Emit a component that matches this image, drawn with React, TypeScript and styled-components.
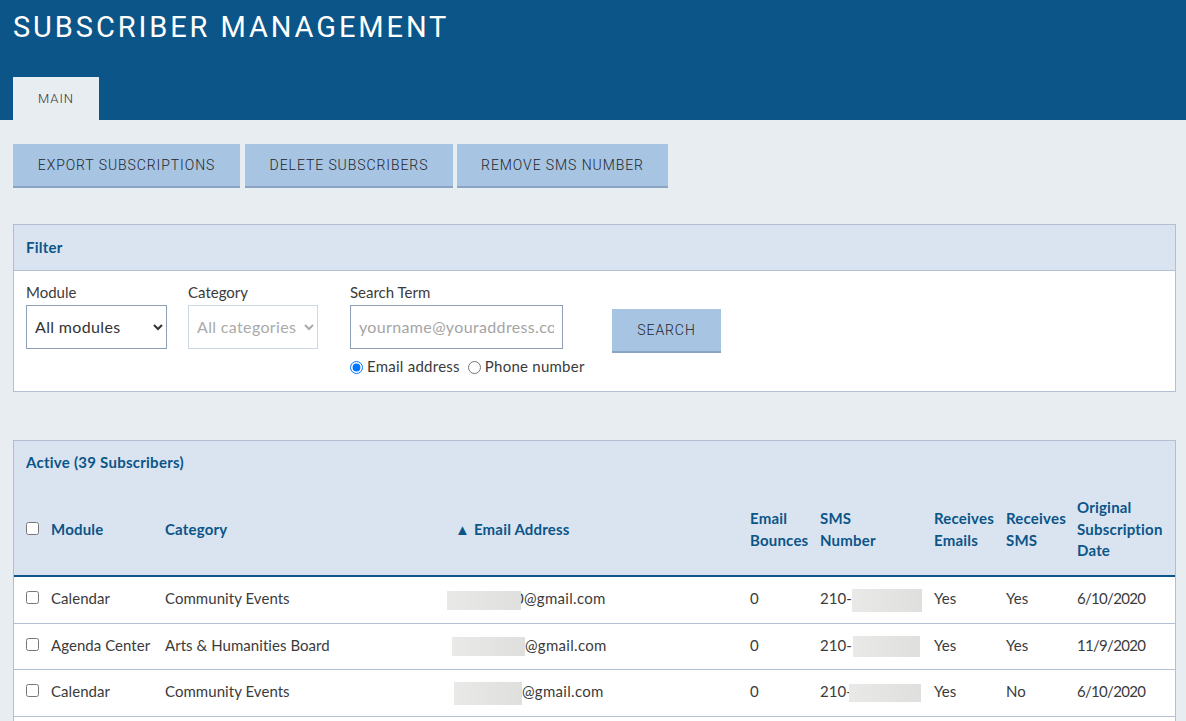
import React from "react";
import styled, { createGlobalStyle } from "styled-components";

const GlobalStyle = createGlobalStyle`
  html, body {
    margin: 0;
    height: 100%;
    overflow: hidden;
    background: #e8edf2;
  }
  body {
    font-family: "Lato", "Open Sans", sans-serif;
    font-size: 15px;
    color: #3b3b3b;
  }
  * {
    box-sizing: border-box;
  }
`;

const Header = styled.header`
  height: 120px;
  background: #0b5588;
  padding: 10px 13px 0;
  display: flex;
  flex-direction: column;
  justify-content: space-between;
`;
const Title = styled.h1`
  margin: 0;
  font-family: "Roboto", sans-serif;
  font-weight: 400;
  font-size: 29px;
  line-height: 34px;
  letter-spacing: 2.9px;
  color: #fff;
`;
const Tab = styled.div`
  width: 86px;
  height: 43px;
  background: #e8edf2;
  display: flex;
  align-items: center;
  justify-content: center;
  font-family: "Roboto", sans-serif;
  font-weight: 300;
  font-size: 13px;
  letter-spacing: 0.9px;
  color: #333;
`;
const Content = styled.main`
  padding: 24px 10px 0 13px;
`;
const Toolbar = styled.div`
  display: flex;
  gap: 5px;
  margin-bottom: 36px;
  & > :last-child {
    margin-left: -1px;
  }
`;
const ActionButton = styled.button<{ $w: number }>`
  width: ${(p) => p.$w}px;
  height: 44px;
  padding: 0;
  border: 0;
  border-bottom: 2px solid #8ba4c4;
  background: #a7c4e2;
  font-family: "Roboto", sans-serif;
  font-weight: 300;
  font-size: 14px;
  letter-spacing: 0.92px;
  color: #22262e;
`;
const Panel = styled.section`
  background: #fff;
  border: 1px solid #b0bfd2;
`;
const FilterPanel = styled(Panel)`
  height: 168px;
  margin-bottom: 48px;
`;
const PanelHeading = styled.div`
  height: 46px;
  padding: 0 12px 2px;
  display: flex;
  align-items: center;
  background: #dae4f0;
  border-bottom: 1px solid #b0bfd2;
  font-size: 15px;
  font-weight: 700;
  letter-spacing: 0.25px;
  color: #0b5588;
`;
const FilterBody = styled.div`
  display: flex;
  padding: 11px 12px 0;
`;
const Field = styled.div<{ $w: number }>`
  width: ${(p) => p.$w}px;
  display: flex;
  flex-direction: column;
  align-items: flex-start;
`;
const FieldLabel = styled.label`
  height: 23px;
  line-height: 20px;
  font-size: 15px;
`;
const Select = styled.select<{ $w: number }>`
  width: ${(p) => p.$w}px;
  height: 44px;
  padding: 0 4px 2px;
  border: 1px solid #8c9fb5;
  border-radius: 0;
  background: #fff;
  font-family: inherit;
  font-size: 16px;
  letter-spacing: 0.35px;
  color: #333;
  &:disabled {
    opacity: 1;
    color: #aaa;
    border-color: #ced7e2;
  }
`;
const TextInput = styled.input`
  width: 213px;
  height: 44px;
  padding: 0 8px 2px;
  border: 1px solid #8c9fb5;
  border-radius: 0;
  font-family: inherit;
  font-size: 16px;
  letter-spacing: 0.35px;
  &::placeholder {
    color: #a5a5a5;
  }
`;
const RadioRow = styled.div`
  display: flex;
  align-items: center;
  height: 20px;
  margin-top: 7px;
  letter-spacing: 0.25px;
  white-space: nowrap;
`;
const RadioLabel = styled.label`
  display: inline-flex;
  align-items: center;
  margin-right: 8px;
  input {
    width: 13px;
    height: 13px;
    margin: 2px 4px 0 0;
  }
`;
const SearchButton = styled(ActionButton)`
  margin: 27px 0 0 0;
`;
const TablePanel = styled(Panel)`
  border-bottom: 0;
`;
const TableHeading = styled(PanelHeading)`
  height: 44px;
  border-bottom: 0;
`;
const Table = styled.table`
  width: 100%;
  table-layout: fixed;
  border-collapse: collapse;
`;
const HeadRow = styled.tr`
  height: 91px;
  background: #dae4f0;
  border-bottom: 2px solid #0b5588;
`;
const HeadCell = styled.th<{ $indent?: number }>`
  padding: 0 0 1px ${(p) => p.$indent ?? 0}px;
  text-align: left;
  font-size: 15px;
  font-weight: 700;
  letter-spacing: 0.2px;
  line-height: 21.5px;
  color: #0b5588;
`;
const BodyRow = styled.tr`
  height: 46.4px;
  border-bottom: 1px solid #b0bfd2;
  &:first-child {
    height: 47.4px;
  }
`;
const Cell = styled.td<{ $spacing?: number }>`
  padding: 0 0 4px;
  white-space: nowrap;
  font-size: 15px;
  letter-spacing: ${(p) => p.$spacing ?? 0.05}px;
`;
const CheckCell = styled.td`
  padding: 0 0 5px 12px;
`;
const CheckHead = styled.th`
  padding: 0 0 4px 12px;
  text-align: left;
`;
const Check = styled.input`
  display: block;
  width: 13px;
  height: 13px;
  margin: 0;
`;
const Redacted = styled.span<{ $w: number; $h: number; $x?: number; $over?: number }>`
  display: inline-block;
  position: relative;
  width: ${(p) => p.$w}px;
  height: ${(p) => p.$h}px;
  margin: -8px ${(p) => -(p.$over ?? 0)}px -8px ${(p) => p.$x ?? 0}px;
  vertical-align: middle;
  background: linear-gradient(90deg, #e9e9e8, #dfdfde);
`;

const columns = [37, 114, 282, 303, 70, 114, 72, 71, 0];

const rows = [
  {
    module: "Calendar",
    category: "Community Events",
    email: { w: 74, h: 19, x: 0, over: 6, text: "0@gmail.com" },
    sms: { w: 70, h: 23 },
    emails: "Yes",
    receives: "Yes",
    date: "6/10/2020",
  },
  {
    module: "Agenda Center",
    category: "Arts & Humanities Board",
    email: { w: 73, h: 19, x: 5, over: 0, text: "@gmail.com" },
    sms: { w: 67, h: 21, x: 1 },
    emails: "Yes",
    receives: "Yes",
    date: "11/9/2020",
  },
  {
    module: "Calendar",
    category: "Community Events",
    email: { w: 68, h: 23, x: 7, over: 0, text: "@gmail.com" },
    sms: { w: 72, h: 18, x: -3 },
    emails: "Yes",
    receives: "No",
    date: "6/10/2020",
  },
];

export default function App() {
  return (
    <>
      <GlobalStyle />
      <Header>
        <Title>SUBSCRIBER MANAGEMENT</Title>
        <Tab>MAIN</Tab>
      </Header>
      <Content>
        <Toolbar>
          <ActionButton $w={227}>EXPORT SUBSCRIPTIONS</ActionButton>
          <ActionButton $w={208}>DELETE SUBSCRIBERS</ActionButton>
          <ActionButton $w={211}>REMOVE SMS NUMBER</ActionButton>
        </Toolbar>

        <FilterPanel>
          <PanelHeading>Filter</PanelHeading>
          <FilterBody>
            <Field $w={162}>
              <FieldLabel>Module</FieldLabel>
              <Select $w={141} defaultValue="all">
                <option value="all">All modules</option>
              </Select>
            </Field>
            <Field $w={162}>
              <FieldLabel>Category</FieldLabel>
              <Select $w={130} disabled defaultValue="all">
                <option value="all">All categories</option>
              </Select>
            </Field>
            <Field $w={262}>
              <FieldLabel>Search Term</FieldLabel>
              <TextInput placeholder="yourname@youraddress.com" />
              <RadioRow>
                <RadioLabel>
                  <input type="radio" name="kind" defaultChecked />
                  Email address
                </RadioLabel>
                <RadioLabel>
                  <input type="radio" name="kind" />
                  Phone number
                </RadioLabel>
              </RadioRow>
            </Field>
            <SearchButton $w={109}>SEARCH</SearchButton>
          </FilterBody>
        </FilterPanel>

        <TablePanel>
          <TableHeading>Active (39 Subscribers)</TableHeading>
          <Table>
            <colgroup>
              {columns.map((w, i) => (
                <col key={i} style={w ? { width: w } : undefined} />
              ))}
            </colgroup>
            <thead>
              <HeadRow>
                <CheckHead>
                  <Check type="checkbox" />
                </CheckHead>
                <HeadCell>Module</HeadCell>
                <HeadCell>Category</HeadCell>
                <HeadCell $indent={8}>▲ Email Address</HeadCell>
                <HeadCell>
                  Email
                  <br />
                  Bounces
                </HeadCell>
                <HeadCell>
                  SMS
                  <br />
                  Number
                </HeadCell>
                <HeadCell>
                  Receives
                  <br />
                  Emails
                </HeadCell>
                <HeadCell>
                  Receives
                  <br />
                  SMS
                </HeadCell>
                <HeadCell>
                  Original
                  <br />
                  Subscription
                  <br />
                  Date
                </HeadCell>
              </HeadRow>
            </thead>
            <tbody>
              {rows.map((row, i) => (
                <BodyRow key={i}>
                  <CheckCell>
                    <Check type="checkbox" />
                  </CheckCell>
                  <Cell>{row.module}</Cell>
                  <Cell>{row.category}</Cell>
                  <Cell $spacing={0.3}>
                    <Redacted $w={row.email.w} $h={row.email.h} $x={row.email.x} $over={row.email.over} />
                    {row.email.text}
                  </Cell>
                  <Cell>0</Cell>
                  <Cell>
                    210-
                    <Redacted $w={row.sms.w} $h={row.sms.h} $x={row.sms.x} />
                  </Cell>
                  <Cell>{row.emails}</Cell>
                  <Cell>{row.receives}</Cell>
                  <Cell $spacing={-0.7}>{row.date}</Cell>
                </BodyRow>
              ))}
              <BodyRow>
                <Cell colSpan={9} />
              </BodyRow>
            </tbody>
          </Table>
        </TablePanel>
      </Content>
    </>
  );
}
